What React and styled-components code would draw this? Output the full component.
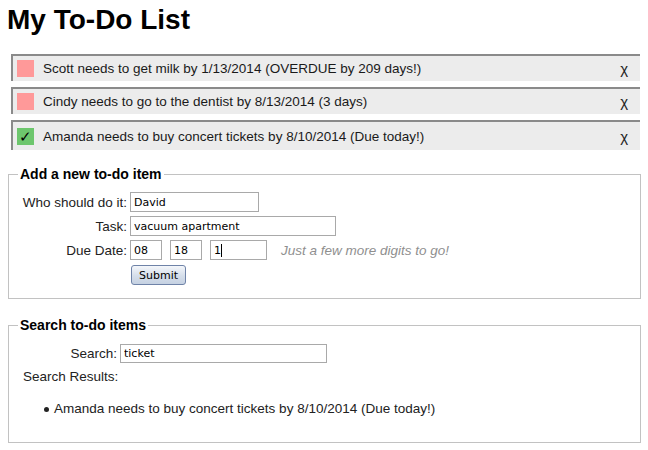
import React from "react";
import styled, { createGlobalStyle } from "styled-components";

const GlobalStyle = createGlobalStyle`
  body {
    margin: 0;
    background: #fff;
    font-family: "Liberation Sans", Arial, sans-serif;
    color: #111;
  }
`;

const Page = styled.div`
  width: 648px;
  height: 450px;
  padding: 4px 8px 0 7px;
  box-sizing: border-box;
  overflow: hidden;
`;

const Title = styled.h1`
  margin: 0;
  font-size: 28px;
  line-height: 32px;
  font-weight: bold;
  color: #000;
`;

const TodoList = styled.div`
  display: flex;
  flex-direction: column;
  gap: 6px;
  margin: 18px 0 0 4px;
  width: 629px;
`;

const TodoItem = styled.div`
  display: flex;
  align-items: center;
  height: ${(p) => (p.$done ? 30 : 27)}px;
  box-sizing: border-box;
  background: #ececec;
  border-top: 2px solid #8a8a8a;
  border-left: 2px solid #8a8a8a;
  padding: 0 12px 0 4px;
  font-size: 13.5px;
  color: #1a1a1a;
`;

const Status = styled.span`
  width: 17px;
  height: 17px;
  flex: none;
  margin-right: 9px;
  background: ${(p) => (p.$done ? "#6dc66d" : "#ff9999")};
  display: flex;
  align-items: center;
  justify-content: center;
  font-size: 15px;
  line-height: 17px;
  color: #000;
`;

const TodoText = styled.span`
  flex: 1;
`;

const Remove = styled.span`
  font-size: 15px;
  color: #222;
`;

const Box = styled.fieldset`
  margin: ${(p) => p.$top}px 0 0 1px;
  width: 633px;
  height: ${(p) => p.$height}px;
  box-sizing: border-box;
  border: 1px solid #c2c2c2;
  padding: 0 6px;
  min-width: 0;
`;

const BoxTitle = styled.legend`
  font-size: 14px;
  font-weight: bold;
  line-height: 16px;
  padding: 0 2px;
  margin-left: 3px;
  color: #000;
`;

const FormGrid = styled.div`
  display: grid;
  grid-template-columns: ${(p) => p.$labelWidth}px auto;
  column-gap: 3px;
  row-gap: 4px;
  align-items: center;
  margin-top: ${(p) => p.$top}px;
`;

const Label = styled.label`
  font-size: 13.5px;
  text-align: right;
  color: #222;
  white-space: nowrap;
`;

const Fields = styled.div`
  display: flex;
  align-items: center;
  gap: 8px;
  margin-top: ${(p) => p.$top || 0}px;
`;

const TextInput = styled.input`
  width: ${(p) => p.$w}px;
  height: ${(p) => p.$h || 20}px;
  box-sizing: border-box;
  border: 1px solid #a9a9a9;
  padding: 0 3px;
  font-family: "DejaVu Sans", Tahoma, sans-serif;
  font-size: 11px;
  color: #000;
  background: #fff;
  outline: none;
`;

const CaretWrap = styled.span`
  position: relative;
  display: inline-flex;
`;

const Caret = styled.span`
  position: absolute;
  left: 11px;
  top: 4px;
  width: 1px;
  height: 13px;
  background: #000;
`;

const Hint = styled.span`
  margin-left: 6px;
  font-size: 13.5px;
  font-style: italic;
  color: #8f8f8f;
`;

const SubmitButton = styled.button`
  width: 55px;
  height: 20px;
  margin-left: 1px;
  border: 1px solid #6f83a8;
  border-radius: 3px;
  background: linear-gradient(#f4f7fb, #d5deea 55%, #c5d1e2);
  font-family: "DejaVu Sans", Tahoma, sans-serif;
  font-size: 11px;
  color: #000;
  padding: 0;
`;

const ResultsLabel = styled.div`
  font-size: 13.5px;
  color: #222;
  margin: 6px 0 0 8px;
`;

const Results = styled.ul`
  margin: 17px 0 0 0;
  padding-left: 39px;
  font-size: 13.5px;
  color: #222;
  list-style: none;
`;

const ResultItem = styled.li`
  position: relative;

  &::before {
    content: "";
    position: absolute;
    left: -10px;
    top: 6px;
    width: 5px;
    height: 5px;
    border-radius: 50%;
    background: #222;
  }
`;

const todos = [
  { text: "Scott needs to get milk by 1/13/2014 (OVERDUE by 209 days!)", done: false },
  { text: "Cindy needs to go to the dentist by 8/13/2014 (3 days)", done: false },
  { text: "Amanda needs to buy concert tickets by 8/10/2014 (Due today!)", done: true },
];

export default function App() {
  return (
    <Page>
      <GlobalStyle />
      <Title>My To-Do List</Title>

      <TodoList>
        {todos.map((t) => (
          <TodoItem key={t.text} $done={t.done}>
            <Status $done={t.done}>{t.done ? "✓" : ""}</Status>
            <TodoText>{t.text}</TodoText>
            <Remove>χ</Remove>
          </TodoItem>
        ))}
      </TodoList>

      <Box $top={16} $height={133}>
        <BoxTitle>Add a new to-do item</BoxTitle>
        <FormGrid $labelWidth={112} $top={10}>
          <Label>Who should do it:</Label>
          <TextInput $w={129} defaultValue="David" />
          <Label>Task:</Label>
          <TextInput $w={206} defaultValue="vacuum apartment" />
          <Label>Due Date:</Label>
          <Fields>
            <TextInput $w={32} defaultValue="08" />
            <TextInput $w={32} defaultValue="18" />
            <CaretWrap>
              <TextInput $w={57} defaultValue="1" />
              <Caret />
            </CaretWrap>
            <Hint>Just a few more digits to go!</Hint>
          </Fields>
          <span />
          <Fields $top={1}>
            <SubmitButton>Submit</SubmitButton>
          </Fields>
        </FormGrid>
      </Box>

      <Box $top={18} $height={126}>
        <BoxTitle>Search to-do items</BoxTitle>
        <FormGrid $labelWidth={102} $top={11}>
          <Label>Search:</Label>
          <TextInput $w={207} $h={19} defaultValue="ticket" />
        </FormGrid>
        <ResultsLabel>Search Results:</ResultsLabel>
        <Results>
          <ResultItem>Amanda needs to buy concert tickets by 8/10/2014 (Due today!)</ResultItem>
        </Results>
      </Box>
    </Page>
  );
}
